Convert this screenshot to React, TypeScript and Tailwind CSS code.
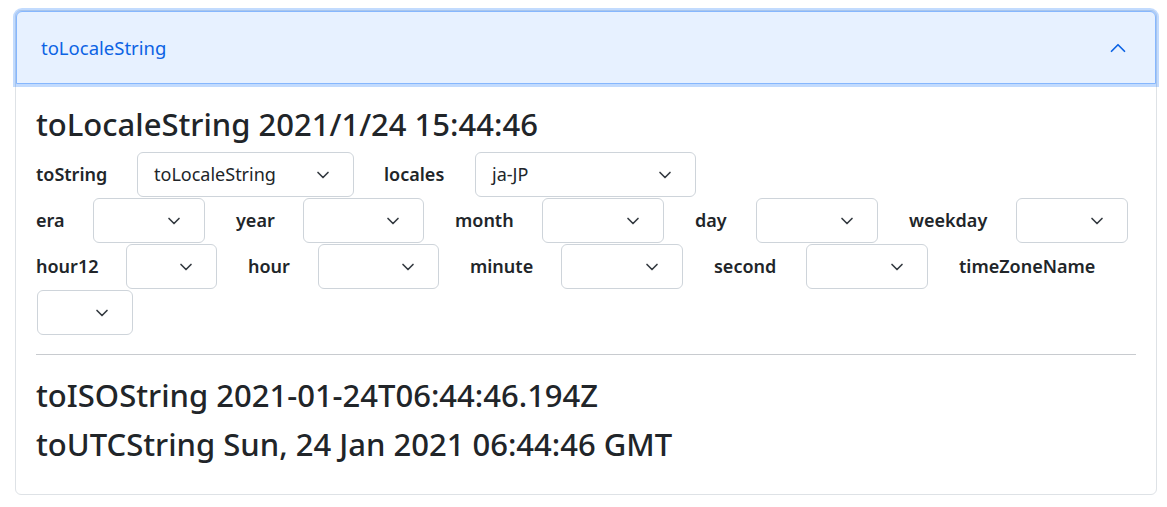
import { ChevronDown, ChevronUp } from "lucide-react";

const Sel = ({ w, value = "" }: { w: string; value?: string }) => (
  <div
    className={`${w} h-[45px] border border-[#ced4da] rounded-md flex items-center justify-between pl-4 pr-5 text-[18px] text-[#212529] bg-white shrink-0`}
  >
    <span>{value}</span>
    <ChevronDown size={20} strokeWidth={2} className="text-[#343a40]" />
  </div>
);

// label column: w = distance from label start to select start
const Field = ({ l, lw, w, value }: { l: string; lw: string; w: string; value?: string }) => (
  <div className="flex items-center">
    <span className={`${lw} text-[18px] font-semibold text-[#212529] shrink-0`}>{l}</span>
    <Sel w={w} value={value} />
  </div>
);

export default function App() {
  return (
    <div
      className="w-[1167px] h-[507px] bg-white pt-[10px] pl-[15px]"
      style={{ fontFamily: '"Noto Sans", "Open Sans", sans-serif' }}
    >
      <div className="w-[1142px] h-[485px] border border-[#dee2e6] rounded-md">
        <div className="h-[73px] bg-[#e7f1ff] border border-[#86b7fe] rounded-t-md shadow-[0_0_0_3px_rgba(13,110,253,0.25)] flex items-center justify-between pl-6 pr-6">
          <span className="text-[18.5px] text-[#0c63e4]">toLocaleString</span>
          <ChevronUp size={26} strokeWidth={1.6} className="text-[#0c63e4]" />
        </div>
        <div className="px-5 pt-[22px]">
          <h3 className="text-[31px] font-medium text-[#212529] leading-[36px]">
            toLocaleString 2021/1/24 15:44:46
          </h3>
          <div className="mt-[10px] flex flex-col gap-[1px]">
            <div className="flex items-center">
              <Field l="toString" lw="w-[101px]" w="w-[217px]" value="toLocaleString" />
              <div className="w-[30px]" />
              <Field l="locales" lw="w-[91px]" w="w-[221px]" value="ja-JP" />
            </div>
            <div className="flex items-center gap-[31px]">
              <Field l="era" lw="w-[57px]" w="w-[112px]" />
              <Field l="year" lw="w-[67px]" w="w-[121px]" />
              <Field l="month" lw="w-[87px]" w="w-[122px]" />
              <Field l="day" lw="w-[61px]" w="w-[122px]" />
              <Field l="weekday" lw="w-[107px]" w="w-[112px]" />
            </div>
            <div className="flex items-center gap-[31px]">
              <Field l="hour12" lw="w-[90px]" w="w-[91px]" />
              <Field l="hour" lw="w-[70px]" w="w-[121px]" />
              <Field l="minute" lw="w-[91px]" w="w-[122px]" />
              <Field l="second" lw="w-[92px]" w="w-[122px]" />
              <span className="text-[18px] font-semibold text-[#212529]">timeZoneName</span>
            </div>
            <div className="pl-[1px]">
              <Sel w="w-[96px]" />
            </div>
          </div>
          <hr className="mt-[19px] border-[#c8cbcf]" />
          <h3 className="mt-[22px] text-[31px] font-medium text-[#212529] leading-[36px]">
            toISOString 2021-01-24T06:44:46.194Z
          </h3>
          <h3 className="mt-[13px] text-[31px] font-medium text-[#212529] leading-[36px]">
            toUTCString Sun, 24 Jan 2021 06:44:46 GMT
          </h3>
        </div>
      </div>
    </div>
  );
}
